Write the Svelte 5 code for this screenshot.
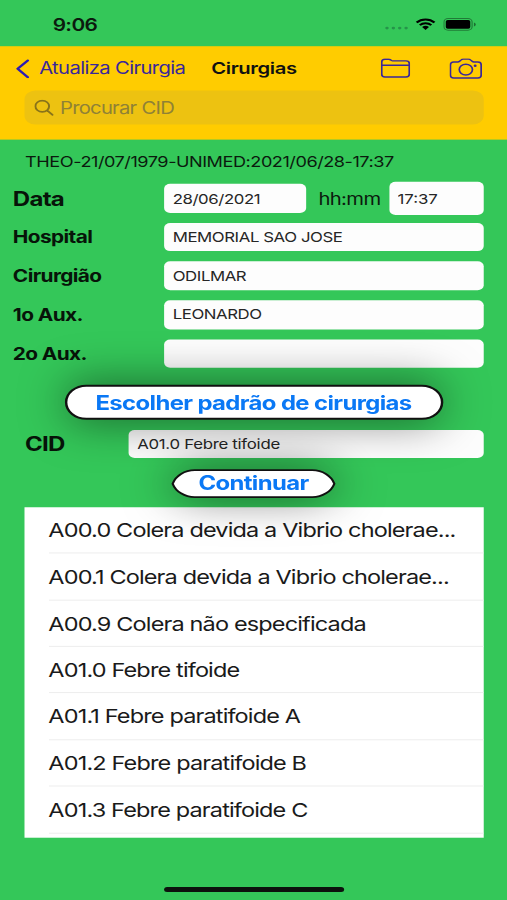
<script lang="ts">
	let search = '';
	let date = '28/06/2021';
	let time = '17:37';
	let cid = 'A01.0 Febre tifoide';

	let team = [
		{ label: 'Hospital', value: 'MEMORIAL SAO JOSE' },
		{ label: 'Cirurgião', value: 'ODILMAR' },
		{ label: '1o Aux.', value: 'LEONARDO' },
		{ label: '2o Aux.', value: '' }
	];

	const codes = [
		'A00.0 Colera devida a Vibrio cholerae...',
		'A00.1 Colera devida a Vibrio cholerae...',
		'A00.9 Colera não especificada',
		'A01.0 Febre tifoide',
		'A01.1 Febre paratifoide A',
		'A01.2 Febre paratifoide B',
		'A01.3 Febre paratifoide C'
	];
</script>

<div class="viewport">
	<div class="screen">
		<div class="status">
			<span class="clock">9:06</span>
			<div class="indicators">
				<svg class="dots" width="20" height="4" viewBox="0 0 20 4">
					<circle cx="2" cy="2" r="1.4" /><circle cx="7.2" cy="2" r="1.4" />
					<circle cx="12.4" cy="2" r="1.4" /><circle cx="17.6" cy="2" r="1.4" />
				</svg>
				<svg class="wifi" width="17" height="12" viewBox="0 0 17 12">
					<path d="M1.2 4.4a10.3 10.3 0 0 1 14.6 0M3.8 7a6.7 6.7 0 0 1 9.4 0" fill="none" stroke="#000" stroke-width="2" />
					<path d="M8.5 11.8 5.7 9a4 4 0 0 1 5.6 0z" />
				</svg>
				<svg class="battery" width="27" height="13" viewBox="0 0 27 13">
					<rect x=".5" y=".5" width="23" height="11.6" rx="3.4" fill="none" stroke="#000" stroke-opacity=".38" />
					<rect x="2" y="2" width="20" height="8.6" rx="1.6" />
					<path d="M25 4.3v4q1.5-.7 1.5-2t-1.5-2z" fill-opacity=".45" />
				</svg>
			</div>
		</div>

		<header>
			<div class="bar">
				<svg class="chevron" width="11" height="19" viewBox="0 0 11 19">
					<path d="M9.7 1.2 1.4 9.5l8.3 8.3" fill="none" stroke="#2b1bb4" stroke-width="2.1" stroke-linecap="round" stroke-linejoin="round" />
				</svg>
				<span class="back">Atualiza Cirurgia</span>
				<span class="title">Cirurgias</span>
				<svg class="folder" width="24" height="20" viewBox="0 0 24 20" fill="none" stroke="#3a2799" stroke-width="1.4">
					<path d="M.7 16V3.7Q.7 1 3.3 1h3q1 0 1.7.6l.8.6q.6.4 1.5.4h10.2q2.7 0 2.7 2.6V16q0 2.7-2.7 2.7H3.3Q.7 18.7.7 16zM.7 6.9h22.5" />
				</svg>
				<svg class="camera" width="27" height="21" viewBox="0 0 27 21" fill="none" stroke="#3a2799" stroke-width="1.4">
					<path d="M3.5 3.7h3.3q.9 0 1.5-.7l1.3-1.4Q10.2.9 11.2.9h4.4q1 0 1.6.7L18.5 3q.6.7 1.5.7h3.2q2.7 0 2.7 2.7v10.5q0 2.7-2.7 2.7H3.5Q.8 19.6.8 16.900v-10.500q0-2.7 2.7-2.7z" />
					<circle cx="13.4" cy="11.3" r="5.4" />
					<circle cx="21" cy="7.5" r="1.2" fill="#3a2799" stroke="none" />
				</svg>
			</div>
			<label class="search">
				<svg width="16" height="17" viewBox="0 0 16 17" fill="none" stroke="#88731a" stroke-width="1.6" stroke-linecap="round">
					<circle cx="6.5" cy="6.8" r="5.6" />
					<path d="m10.7 11.1 4.2 4.2" />
				</svg>
				<input type="text" placeholder="Procurar CID" bind:value={search} />
			</label>
		</header>

		<main>
			<p class="patient">THEO-21/07/1979-UNIMED:2021/06/28-17:37</p>

			<div class="row when">
				<span class="label big">Data</span>
				<input class="field date" type="text" bind:value={date} />
				<span class="hint">hh:mm</span>
				<input class="field time" type="text" bind:value={time} />
			</div>

			{#each team as person}
				<div class="row">
					<span class="label">{person.label}</span>
					<input class="field" type="text" bind:value={person.value} />
				</div>
			{/each}

			<button class="pattern">Escolher padrão de cirurgias</button>

			<div class="row cid">
				<span class="label big">CID</span>
				<input class="field" type="text" bind:value={cid} />
			</div>

			<button class="continue">
				<svg width="134" height="29" viewBox="0 0 134 29">
					<path d="M19 1H115A19.3 19.3 0 0 1 133 14.5A19.3 19.3 0 0 1 115 28H19A19.3 19.3 0 0 1 1 14.5A19.3 19.3 0 0 1 19 1Z" fill="#fff" stroke="#111" stroke-width="1.8" />
				</svg>
				<span>Continuar</span>
			</button>

			<ul>
				{#each codes as code}
					<li>{code}</li>
				{/each}
			</ul>
		</main>

		<div class="home"></div>
	</div>
</div>

<style>
	:global(body) {
		background: #34c759;
	}

	.viewport {
		width: 507px;
		height: 900px;
		overflow: hidden;
	}

	/* 414x896 point layout stretched over the whole viewport */
	.screen {
		position: relative;
		width: 414px;
		height: 896px;
		transform: scale(1.22464, 1.00446);
		transform-origin: 0 0;
		background: #34c759;
		color: #0b1a0e;
		font-family: Inter, 'Liberation Sans', sans-serif;
		font-size: 16.5px;
	}

	.status {
		display: flex;
		justify-content: space-between;
		height: 46px;
		box-sizing: border-box;
		padding: 14.5px 25.5px 0 43px;
	}

	.clock {
		font-size: 17px;
		line-height: 20px;
		font-weight: 600;
		letter-spacing: -0.5px;
	}

	.indicators {
		display: flex;
		align-items: flex-start;
	}

	.dots {
		margin: 11.5px 5px 0 0;
		fill: #26934a;
	}

	.wifi {
		margin: 3.5px 6px 0 0;
	}

	.battery {
		margin-top: 3px;
	}

	header {
		height: 93px;
		background: #ffcc00;
	}

	.bar {
		display: flex;
		align-items: center;
		height: 44px;
		padding-left: 13px;
	}

	.back {
		width: 132px;
		margin-left: 8px;
		color: #39279b;
		letter-spacing: -0.5px;
		white-space: nowrap;
	}

	.title {
		width: 138.5px;
		margin-left: 8.5px;
		color: #111;
		font-weight: 600;
		letter-spacing: -0.3px;
	}

	.chevron,
	.folder,
	.camera {
		flex: none;
	}

	.camera {
		margin-left: 32px;
	}

	.search {
		display: flex;
		align-items: center;
		height: 34px;
		margin: 0 19.5px;
		padding-left: 8px;
		border-radius: 9px;
		background: #edc211;
	}

	.search input {
		width: 300px;
		margin-left: 5.5px;
		padding: 0;
		border: 0;
		outline: 0;
		background: none;
		font: inherit;
		letter-spacing: -0.6px;
	}

	.search input::placeholder {
		color: #8f8136;
	}

	main {
		display: flex;
		flex-direction: column;
	}

	.patient {
		height: 20px;
		margin: 12px 0 10.5px 20.5px;
		font-size: 14.8px;
		line-height: 20px;
		letter-spacing: -0.38px;
	}

	.row {
		display: flex;
		align-items: center;
		height: 28.7px;
		margin: 0 19.5px 10px 10.5px;
	}

	.when {
		height: 32px;
		margin-bottom: 8px;
	}

	.label {
		flex: none;
		width: 123.5px;
		padding-top: 1px;
		color: #071409;
		font-size: 17px;
		font-weight: 700;
		letter-spacing: -0.5px;
	}

	.big {
		padding-top: 0;
		font-size: 19.6px;
		letter-spacing: -0.6px;
	}

	.field {
		flex: 1;
		min-width: 0;
		box-sizing: border-box;
		height: 28.7px;
		padding: 0 7px;
		border: 0;
		border-radius: 5px;
		outline: 0;
		background: #fdfdfd;
		color: #262626;
		font-family: inherit;
		font-size: 13.7px;
		letter-spacing: -0.33px;
	}

	.date {
		flex: none;
		width: 116px;
	}

	.hint {
		width: 57.5px;
		padding-left: 10px;
		letter-spacing: -0.5px;
	}

	.time {
		flex: none;
		width: 77px;
		height: 32.5px;
		letter-spacing: 0;
	}

	button {
		position: relative;
		align-self: center;
		padding: 0;
		color: #0a78f5;
		font-family: inherit;
		font-size: 19.5px;
		font-weight: 700;
		letter-spacing: -0.5px;
	}

	.pattern {
		width: 309px;
		height: 35px;
		margin: 6.5px 0 10px;
		padding-top: 1px;
		border: 2px solid #111;
		border-radius: 18px;
		background: #fff;
		box-shadow: 0 0 40px rgba(0, 0, 0, 0.55);
	}

	.cid {
		margin-left: 20.5px;
	}

	.cid .label {
		width: 84.5px;
	}

	.cid .field {
		letter-spacing: -0.22px;
	}

	.continue {
		width: 134px;
		height: 29px;
		margin-top: 0.2px;
		border: 0;
		background: none;
	}

	.continue svg {
		position: absolute;
		inset: 0;
		overflow: visible;
		filter: drop-shadow(0 0 20px rgba(0, 0, 0, 0.55));
	}

	.continue span {
		position: relative;
	}

	ul {
		height: 329px;
		margin: 9.3px 19.5px 0 20px;
		padding: 0;
		overflow: hidden;
		background: #fff;
		list-style: none;
	}

	li {
		height: 46.4px;
		box-sizing: border-box;
		margin-left: 19.5px;
		border-bottom: 1px solid #ededed;
		color: #1a1a1a;
		font-size: 19.2px;
		letter-spacing: -0.7px;
		line-height: 47px;
		white-space: nowrap;
	}

	.home {
		position: absolute;
		left: 134px;
		bottom: 8px;
		width: 147px;
		height: 5px;
		border-radius: 3px;
		background: #0c120d;
	}
</style>
